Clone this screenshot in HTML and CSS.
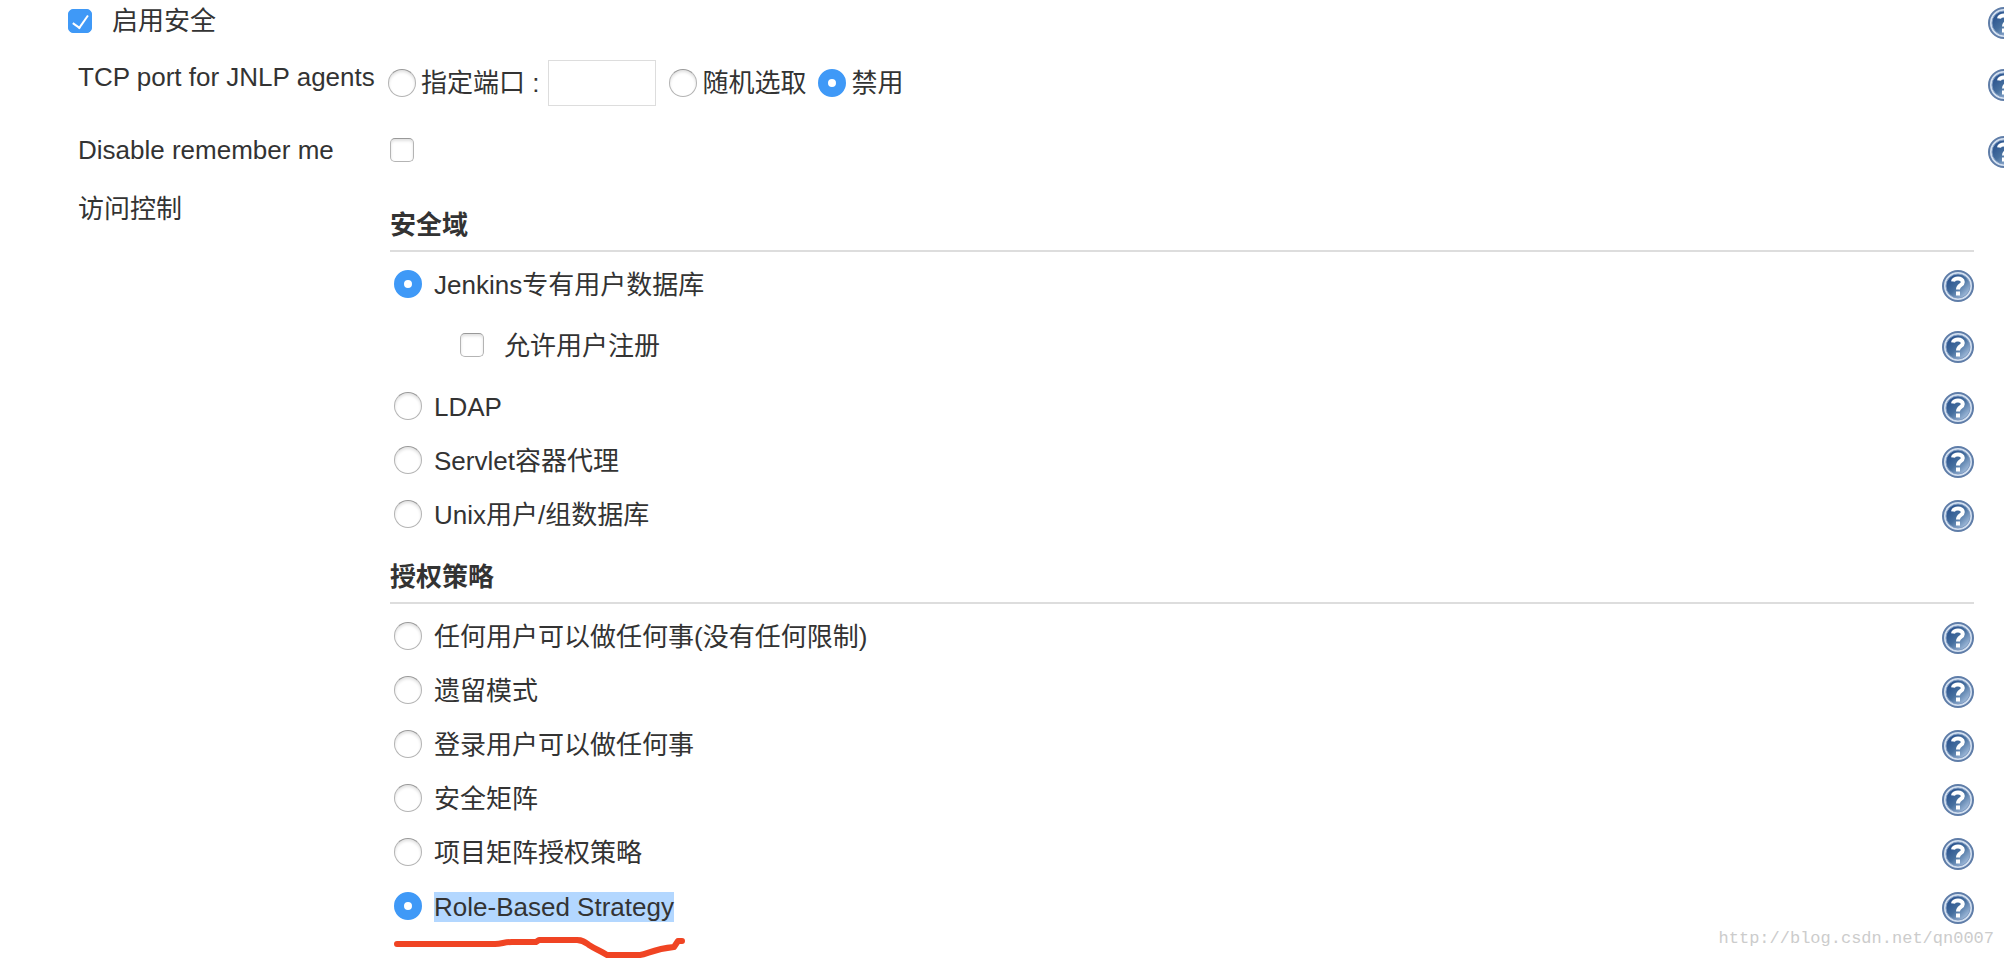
FILE: index.html
```html
<!DOCTYPE html>
<html lang="zh-CN">
<head>
    <meta charset="UTF-8">
    <meta name="viewport" content="width=device-width, initial-scale=1.0">
    <title>Jenkins</title>
    <link rel="stylesheet" href="styles.css">
</head>
<body>
    <!-- help icon, shared by all rows -->
    <svg class="defs" width="0" height="0" aria-hidden="true">
        <defs>
            <linearGradient id="helpFill" x1="0" y1="0" x2="1" y2="1">
                <stop offset="0.1" stop-color="#264f8c"/>
                <stop offset="0.5" stop-color="#47709f"/>
                <stop offset="0.9" stop-color="#a9c2e0"/>
            </linearGradient>
            <symbol id="help" viewBox="0 0 32 32">
                <circle cx="16" cy="16" r="15" fill="#d3e0f0" stroke="#5f7da8" stroke-width="2"/>
                <circle cx="16" cy="16" r="12" fill="url(#helpFill)" stroke="#7f9bc2" stroke-width="1"/>
                <path d="M11 11.5C11.5 7.5 20.8 7.2 20.8 12C20.8 15.5 16 15 16 19.5" fill="none" stroke="#fff" stroke-width="4"/>
                <rect x="14" y="21.5" width="4" height="4" fill="#fff"/>
            </symbol>
        </defs>
    </svg>

    <form class="config">
        <div class="row enable-row">
            <input type="checkbox" id="useSecurity" checked>
            <label for="useSecurity">启用安全</label>
            <a class="help" href="#" aria-label="帮助"><svg><use href="#help"/></svg></a>
        </div>

        <div class="row port-row">
            <span class="name">TCP port for JNLP agents</span>
            <div class="setting">
                <input type="radio" name="port" id="portFixed">
                <label for="portFixed">指定端口 :</label>
                <input type="text" class="port" aria-label="端口">
                <input type="radio" name="port" id="portRandom">
                <label for="portRandom">随机选取</label>
                <input type="radio" name="port" id="portDisable" checked>
                <label for="portDisable">禁用</label>
            </div>
            <a class="help" href="#" aria-label="帮助"><svg><use href="#help"/></svg></a>
        </div>

        <div class="row remember-row">
            <label class="name" for="remember">Disable remember me</label>
            <div class="setting"><input type="checkbox" id="remember"></div>
            <a class="help" href="#" aria-label="帮助"><svg><use href="#help"/></svg></a>
        </div>

        <div class="access">
            <span class="name">访问控制</span>
            <div class="groups">
                <h2>安全域</h2>
                <div class="option">
                    <input type="radio" name="realm" id="jenkins" checked>
                    <label for="jenkins">Jenkins专有用户数据库</label>
                    <a class="help" href="#" aria-label="帮助"><svg><use href="#help"/></svg></a>
                </div>
                <div class="option nested">
                    <input type="checkbox" id="signup">
                    <label for="signup">允许用户注册</label>
                    <a class="help" href="#" aria-label="帮助"><svg><use href="#help"/></svg></a>
                </div>
                <div class="option">
                    <input type="radio" name="realm" id="ldap">
                    <label for="ldap">LDAP</label>
                    <a class="help" href="#" aria-label="帮助"><svg><use href="#help"/></svg></a>
                </div>
                <div class="option">
                    <input type="radio" name="realm" id="servlet">
                    <label for="servlet">Servlet容器代理</label>
                    <a class="help" href="#" aria-label="帮助"><svg><use href="#help"/></svg></a>
                </div>
                <div class="option">
                    <input type="radio" name="realm" id="unix">
                    <label for="unix">Unix用户/组数据库</label>
                    <a class="help" href="#" aria-label="帮助"><svg><use href="#help"/></svg></a>
                </div>

                <h2>授权策略</h2>
                <div class="option">
                    <input type="radio" name="strategy" id="anyone">
                    <label for="anyone">任何用户可以做任何事(没有任何限制)</label>
                    <a class="help" href="#" aria-label="帮助"><svg><use href="#help"/></svg></a>
                </div>
                <div class="option">
                    <input type="radio" name="strategy" id="legacy">
                    <label for="legacy">遗留模式</label>
                    <a class="help" href="#" aria-label="帮助"><svg><use href="#help"/></svg></a>
                </div>
                <div class="option">
                    <input type="radio" name="strategy" id="loggedIn">
                    <label for="loggedIn">登录用户可以做任何事</label>
                    <a class="help" href="#" aria-label="帮助"><svg><use href="#help"/></svg></a>
                </div>
                <div class="option">
                    <input type="radio" name="strategy" id="matrix">
                    <label for="matrix">安全矩阵</label>
                    <a class="help" href="#" aria-label="帮助"><svg><use href="#help"/></svg></a>
                </div>
                <div class="option">
                    <input type="radio" name="strategy" id="projectMatrix">
                    <label for="projectMatrix">项目矩阵授权策略</label>
                    <a class="help" href="#" aria-label="帮助"><svg><use href="#help"/></svg></a>
                </div>
                <div class="option">
                    <input type="radio" name="strategy" id="roleBased" checked>
                    <label for="roleBased"><mark>Role-Based Strategy</mark></label>
                    <a class="help" href="#" aria-label="帮助"><svg><use href="#help"/></svg></a>
                    <svg class="underline" viewBox="0 0 300 24" aria-hidden="true">
                        <path d="M7 10H105C112 10 114 8 122 8H146L149 6H187C193 6 195 8 199 11C205 15 211 17 217 21H250C258 20 263 15 284 13L288 7H292"/>
                    </svg>
                </div>
            </div>
        </div>
    </form>
    <span class="watermark">http://blog.csdn.net/qn0007</span>
</body>
</html>
```

FILE: styles.css
```css
* {
    box-sizing: border-box;
}
body {
    position: relative;
    min-height: 100vh;
    margin: 0;
    overflow: hidden;
    background-color: #fff;
    color: #333;
    font-family: "Liberation Sans", "Noto Sans CJK SC", sans-serif;
    font-size: 26px;
    line-height: 30px;
}
.defs {
    position: absolute;
}
.row {
    display: flex;
    align-items: center;
    padding-left: 78px;
    margin-right: -16px; /* these icons run past the window edge */
}
.enable-row {
    height: 42px;
    padding-left: 68px;
}
.enable-row label {
    margin-left: 20px;
}
.port-row {
    height: 82px;
}
.port-row .name {
    padding-bottom: 12px;
}
.remember-row {
    height: 52px;
}
.name {
    flex: 0 0 310px;
    white-space: nowrap;
}
.setting {
    display: flex;
    align-items: center;
}
.setting label {
    margin: 0 12px 0 5px;
}
.setting label:first-of-type {
    margin-right: 9px;
}
.remember-row input {
    margin-left: 2px;
}
input {
    flex: none;
    margin: 0;
}
input[type="radio"], input[type="checkbox"] {
    appearance: none;
    border: 1px solid #b4b4b4;
    border-top-color: #999;
    background-color: #fff;
    box-shadow: inset 0 2px 3px rgba(0, 0, 0, 0.12);
}
input[type="radio"] {
    width: 28px;
    height: 28px;
    border-radius: 50%;
}
input[type="checkbox"] {
    width: 24px;
    height: 24px;
    border-radius: 5px;
}
input[type="radio"]:checked {
    border: 10px solid #3f99f7;
    box-shadow: none;
}
input[type="checkbox"]:checked {
    display: grid;
    place-items: center;
    border-color: #3f99f7;
    background-color: #3f99f7;
    box-shadow: none;
}
input[type="checkbox"]:checked::before {
    content: "";
    width: 7px;
    height: 14px;
    margin-bottom: 3px;
    border: solid #fff;
    border-width: 0 2px 2px 0;
    transform: rotate(35deg);
}
.port {
    width: 108px;
    height: 46px;
    margin-right: 13px;
    border: 1px solid #ddd;
    font: inherit;
}
.help {
    height: 32px;
    margin-left: auto;
    margin-top: 4px;
}
.help svg {
    display: block;
    width: 32px;
    height: 32px;
}
.access {
    display: flex;
    padding: 18px 30px 0 78px;
}
.access .name {
    flex-basis: 312px;
}
.groups {
    flex: 1;
}
h2 {
    height: 63px;
    margin: 0 0 5px;
    padding-top: 21px;
    border-bottom: 2px solid #ddd;
    font-size: 26px;
    line-height: 30px;
}
.groups h2:first-child {
    height: 58px;
    padding-top: 16px;
}
.option {
    position: relative;
    display: flex;
    align-items: center;
    height: 54px;
    padding-left: 4px;
}
.option label {
    padding-top: 2px;
    margin-left: 12px;
}
.nested {
    height: 68px;
    padding-left: 70px;
}
.nested label {
    margin-left: 20px;
}
mark {
    background-color: #b3d7ff;
    color: inherit;
}
/* hand-drawn line under the chosen strategy */
.underline {
    position: absolute;
    left: 0;
    top: 55px;
    width: 300px;
    height: 24px;
    fill: none;
    stroke: #f04423;
    stroke-width: 6px;
    stroke-linecap: round;
    stroke-linejoin: round;
}
.watermark {
    position: absolute;
    right: 10px;
    bottom: 4px;
    color: #ccc;
    font-family: "Liberation Mono", monospace;
    font-size: 17px;
}
```
